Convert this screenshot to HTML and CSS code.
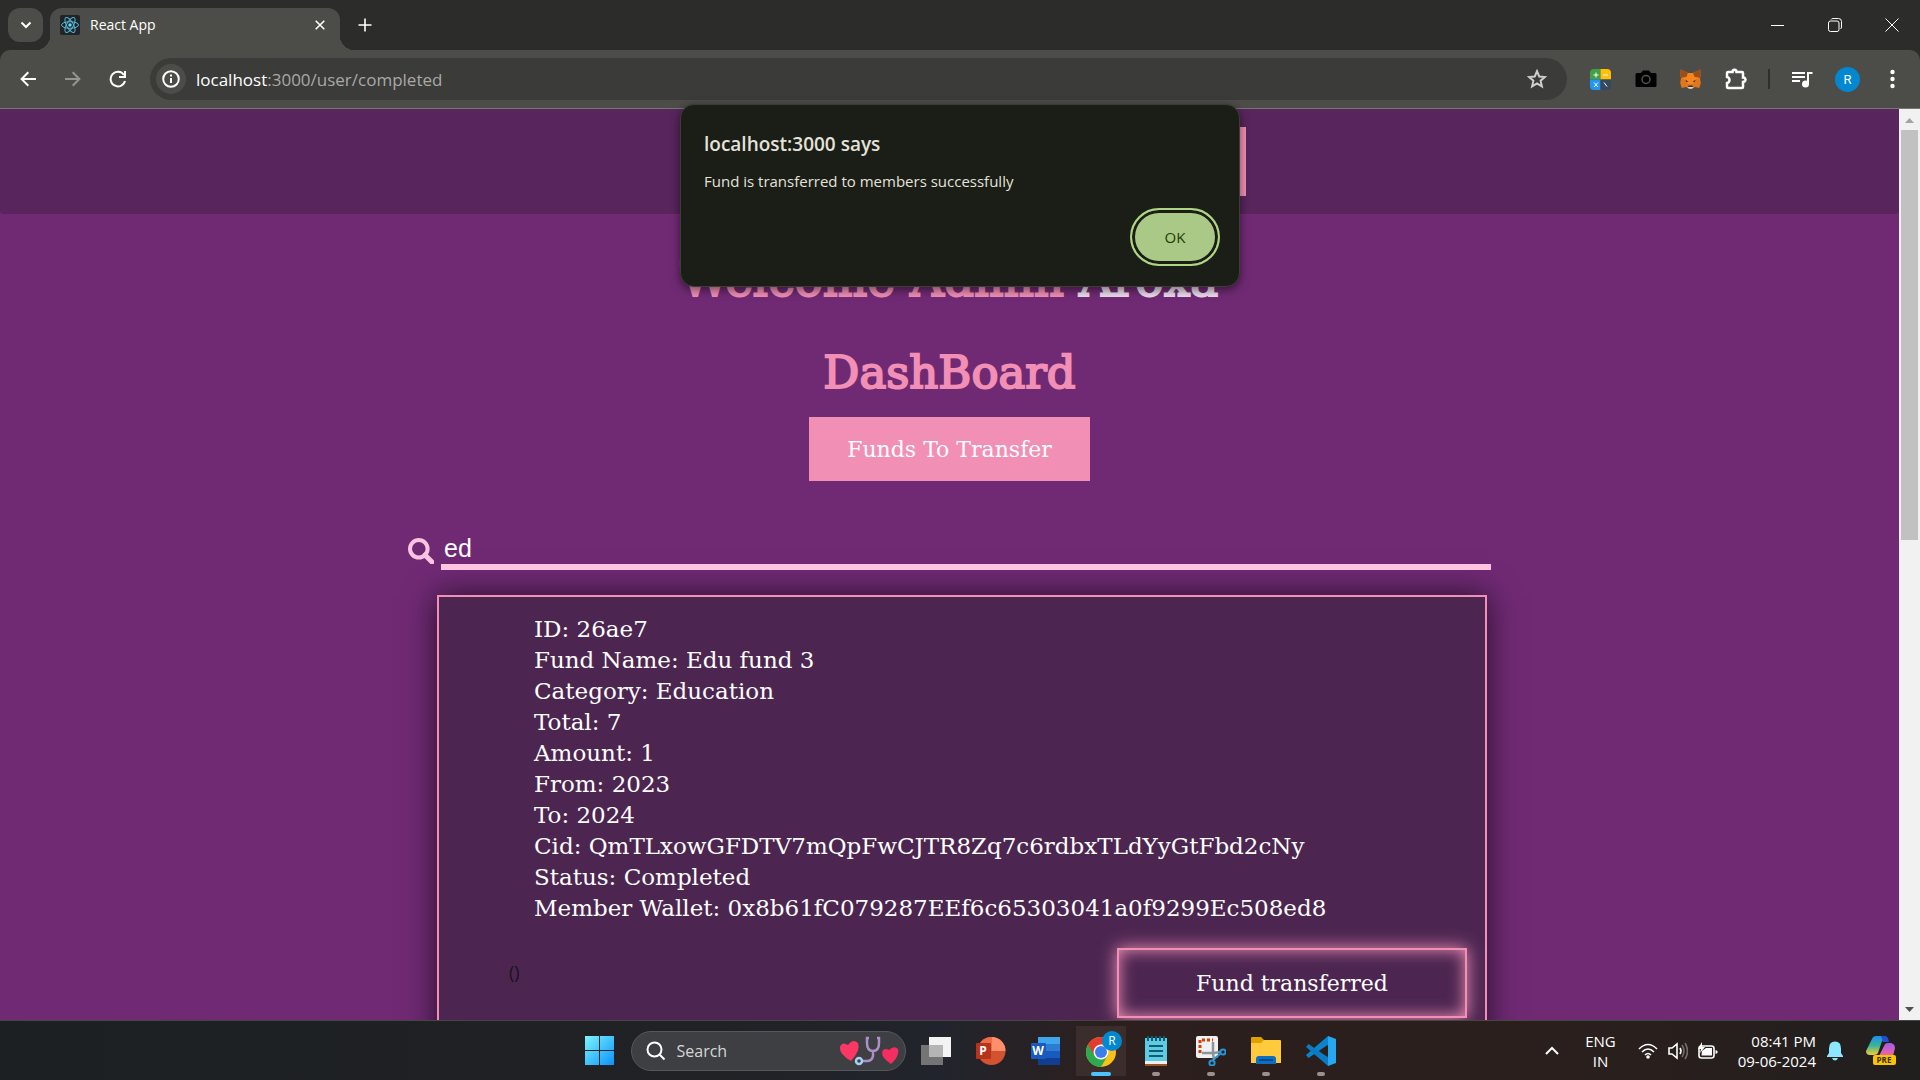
FILE: index.html
```html
<!DOCTYPE html>
<html lang="en">
<head>
<meta charset="utf-8">
<title>React App</title>
<link rel="stylesheet" href="styles.css">
</head>
<body>
<header class="titlebar">
  <button class="tab-search" aria-label="Search tabs"><svg width="12" height="8" viewBox="0 0 12 8"><path d="M1.500 1.500 6 6l4.500-4.500" class="line thick"/></svg></button>
  <div class="tab">
    <svg width="20" height="20" viewBox="0 0 20 20"><rect width="20" height="20" rx="2" fill="#20232a"/><g fill="none" stroke="#53b9d1" stroke-width="1"><ellipse cx="10" cy="10" rx="8.500" ry="3.300"/><ellipse cx="10" cy="10" rx="8.500" ry="3.300" transform="rotate(60 10 10)"/><ellipse cx="10" cy="10" rx="8.500" ry="3.300" transform="rotate(120 10 10)"/></g><circle cx="10" cy="10" r="1.700" fill="#61dafb"/></svg>
    <span class="tab-title">React App</span>
    <button class="plain" aria-label="Close tab"><svg width="10" height="10" viewBox="0 0 10 10"><path d="M.7.7l8.600 8.600M9.300.7.7 9.300" class="line"/></svg></button>
  </div>
  <button class="plain new-tab" aria-label="New tab"><svg width="14" height="14" viewBox="0 0 14 14"><path d="M7 .5v13M.5 7h13" class="line"/></svg></button>
  <div class="window-buttons">
    <button class="plain" aria-label="Minimize"><svg width="13" height="13" viewBox="0 0 13 13"><path d="M0 6.500h13" class="line thin"/></svg></button>
    <button class="plain" aria-label="Restore"><svg width="14" height="14" viewBox="0 0 14 14"><rect x=".5" y="3" width="10.500" height="10.500" rx="2" class="line thin"/><path d="M3 1.500Q3.500.5 5 .5h5.500q3 0 3 3V9q0 1.300-1 2" class="line thin"/></svg></button>
    <button class="plain" aria-label="Close"><svg width="14" height="14" viewBox="0 0 14 14"><path d="M.5.5l13 13M13.500.5l-13 13" class="line thin"/></svg></button>
  </div>
</header>
<nav class="toolbar" aria-label="Browser">
  <button class="plain slot" aria-label="Back"><svg width="16" height="16" viewBox="0 0 16 16"><path d="M16 8H1.800M8.300 1.300 1.600 8l6.700 6.700" class="line thick"/></svg></button>
  <button class="plain slot dim" aria-label="Forward"><svg width="16" height="16" viewBox="0 0 16 16"><path d="M0 8h14.200M7.700 1.300 14.400 8l-6.700 6.700" class="line thick"/></svg></button>
  <button class="plain slot" aria-label="Reload"><svg width="18" height="18" viewBox="0 0 18 18"><path d="M15 5A7.300 7.300 0 1 0 16 11M16 1v6h-6" class="line thick"/></svg></button>
  <div class="omnibox">
    <button class="plain site-info" aria-label="Site information"><svg width="18" height="18" viewBox="0 0 18 18"><circle cx="9" cy="9" r="7.800" class="line thick"/><path d="M9 8v5M9 4.500v2" class="line thick"/></svg></button>
    <span class="url"><b>localhost</b>:3000/user/completed</span>
    <button class="plain star" aria-label="Bookmark"><svg width="20" height="20" viewBox="0 0 20 20"><path d="M10 2.200l2.200 5.300 5.700.5-4.300 3.700 1.300 5.600-4.900-3-4.900 3 1.300-5.600L2.100 8l5.700-.5z" class="line thick"/></svg></button>
  </div>
  <button class="plain slot" aria-label="Calculator extension"><svg width="21" height="21" viewBox="0 0 21 21"><clipPath id="calc"><rect width="21" height="21" rx="4"/></clipPath><g clip-path="url(#calc)"><path fill="#43a047" d="M0 0h10.500v10.500H0z"/><path fill="#ffc107" d="M10.500 0H21v10.500H10.500z"/><path fill="#2196f3" d="M0 10.500h10.500V21H0z"/><path fill="#34495e" d="M10.500 10.500H21V21H10.500z"/></g><path d="M3.500 6h5M6 3.500v5M13 6h5M4 13.500l4 4.500M8 13.500l-4 4.500M14 13.500l3 4" class="line thin"/></svg></button>
  <button class="plain slot" aria-label="Camera extension"><svg width="22" height="18" viewBox="0 0 22 18"><path d="M2 3h4l2-2.500h6L16 3h4q1.500 0 1.500 1.500v11Q21.500 17 20 17H2Q.5 17 .5 15.500v-11Q.5 3 2 3z"/><circle cx="11" cy="9.500" r="4" fill="none" stroke="#555" stroke-width="1.500"/></svg></button>
  <button class="plain slot" aria-label="MetaMask"><svg width="21" height="20" viewBox="0 0 21 20"><path fill="#e2761b" d="M.8.5 8 4h5L20.200.5 21 5l-1 4 .8 5-1.500 5-4.300-1-2.500 1.500h-4L6 18l-4.300 1L.2 14 1 9 0 5z"/><path fill="#9c4d1c" d="M.8.5 8 4 6.500 8 1 9 0 5zM20.200.5 13 4l1.500 4L20 9l1-4z"/><path fill="#f6851b" d="M1 9l5.500-1L8 4h5l1.500 4L20 9l-5 2-2 4H8l-2-4z"/><path fill="#233447" d="M5.500 11l3 1.500-2.300.5zM15.500 11l-3 1.500 2.300.5zM8.500 16.500h4l.5 1.500H8z"/><path fill="#d8d5d2" d="M7.500 18h6l-1.500 1.800H9z"/></svg></button>
  <button class="plain slot" aria-label="Extensions"><svg width="22" height="22" viewBox="0 0 22 22"><path d="M3 4h4.500q0-2 2-2.200 2 .2 2 2.200H17q1 0 1 1v4.500q2.300 0 2.500 2.200-.2 2.300-2.500 2.300V19q0 1-1 1H3q-1 0-1-1v-4q2.500-.5 2.500-3T2 9V5q0-1 1-1z" class="line heavy"/></svg></button>
  <span class="divider"></span>
  <button class="plain slot" aria-label="Media"><svg width="21" height="17" viewBox="0 0 21 17"><path d="M0 2h13M0 6h13M0 10h8M16 13V2h4.500" class="line thick"/><circle cx="13.500" cy="13" r="3.500" fill="#fff"/></svg></button>
  <button class="plain slot" aria-label="Profile"><span class="avatar">R</span></button>
  <button class="plain slot" aria-label="Menu"><svg width="5" height="20" viewBox="0 0 5 20"><g fill="#fff"><circle cx="2.500" cy="3" r="2.200"/><circle cx="2.500" cy="10" r="2.200"/><circle cx="2.500" cy="17" r="2.200"/></g></svg></button>
</nav>

<div class="viewport">
  <main class="page">
    <div class="site-nav"><div class="banner"></div></div>
    <h1>Welcome Admin <span>Aroxa</span></h1>
    <h2>DashBoard</h2>
    <button class="funds">Funds To Transfer</button>
    <div class="listing">
      <label class="search">
        <svg width="26" height="26" viewBox="0 0 26 26" role="img" aria-label="Search funds"><circle cx="10.800" cy="10.800" r="8.800" fill="none" stroke="#fcc4e0" stroke-width="4"/><path d="M17 17l7 7" stroke="#fcc4e0" stroke-width="5" stroke-linecap="round"/></svg>
        <input type="text" value="ed">
      </label>
      <article class="fund">
        <ul>
          <li>ID: 26ae7</li>
          <li>Fund Name: Edu fund 3</li>
          <li>Category: Education</li>
          <li>Total: 7</li>
          <li>Amount: 1</li>
          <li>From: 2023</li>
          <li>To: 2024</li>
          <li>Cid: QmTLxowGFDTV7mQpFwCJTR8Zq7c6rdbxTLdYyGtFbd2cNy</li>
          <li>Status: Completed</li>
          <li>Member Wallet: 0x8b61fC079287EEf6c65303041a0f9299Ec508ed8</li>
        </ul>
        <div class="fund-actions"><span>()</span><button class="transferred">Fund transferred</button></div>
      </article>
    </div>
  </main>
  <div class="scrollbar"><svg width="21" height="21" viewBox="0 0 21 21"><path fill="#a3a3a3" d="M6 14l4.500-5 4.500 5z"/></svg><div class="thumb"></div><svg class="down" width="21" height="21" viewBox="0 0 21 21"><path fill="#505050" d="M6 8h9l-4.500 5z"/></svg></div>
</div>

<dialog open class="alert">
  <h3>localhost:3000 says</h3>
  <p>Fund is transferred to members successfully</p>
  <button class="ok">OK</button>
</dialog>

<footer class="taskbar">
  <div class="apps">
    <button class="plain app" aria-label="Start"><svg width="29" height="29" viewBox="0 0 29 29"><defs><linearGradient id="win" x2="1" y2="1" gradientUnits="userSpaceOnUse" gradientTransform="scale(29)"><stop stop-color="#7df3fd"/><stop offset="1" stop-color="#0a93fc"/></linearGradient></defs><path fill="url(#win)" d="M0 0h14v14H0zM15 0h14v14H15zM0 15h14v14H0zM15 15h14v14H15z"/></svg></button>
    <button class="task-search">
      <svg width="20" height="20" viewBox="0 0 20 20"><circle cx="8.500" cy="8.500" r="7" class="line thick"/><path d="M13.500 13.500l5 5" class="line thick"/></svg>
      <span>Search</span>
      <svg width="60" height="30" viewBox="0 0 60 30"><path fill="#fb3766" d="M12 25Q0 18 1 11q2-6 8-2 5-7 10-2 3 7-7 18z"/><path fill="#f52d61" d="M52 28q-9-6-9-11 1-6 7-3 5-5 9-1 2 7-7 15z"/><path d="M30 2h-2v5q0 8 6 8t6-8V2h-2M34 15v5q-1 5-6 5h-4" fill="none" stroke="#ad8fca" stroke-width="2.500"/><circle cx="20" cy="25" r="3" fill="none" stroke="#a9d0f0" stroke-width="2.500"/></svg>
    </button>
    <button class="plain app" aria-label="Task view"><svg width="30" height="28" viewBox="0 0 30 28"><path fill="#f3f3f3" d="M8 0h22v20H8z"/><path fill="#747474" d="M0 8h22v20H0z"/><path fill="#b5b5b5" d="M8 8h14v12H8z"/></svg></button>
    <button class="plain app" aria-label="PowerPoint"><svg width="30" height="28" viewBox="0 0 30 28"><circle cx="15.500" cy="14" r="14" fill="#d35230"/><path fill="#ff8f6b" d="M15.500 0a14 14 0 0 1 14 14h-14z"/><path fill="#ed6c47" d="M15.500 0v14h-14a14 14 0 0 1 14-14z"/><rect y="6" width="15" height="16" rx="1" fill="#b7341a"/><text x="7" y="18" class="glyph">P</text></svg></button>
    <button class="plain app" aria-label="Word"><svg width="30" height="28" viewBox="0 0 30 28"><path fill="#41a5ee" d="M7 0h22v7H7z"/><path fill="#2b7cd3" d="M7 7h22v7H7z"/><path fill="#185abd" d="M7 14h22v7H7z"/><path fill="#103f91" d="M7 21h22v7H7z"/><rect y="6" width="15" height="16" rx="1" fill="#185abd"/><text x="7" y="18" class="glyph">W</text></svg></button>
    <button class="plain app active running" aria-label="Chrome"><svg width="38" height="38" viewBox="0 0 38 38"><circle cx="17" cy="22" r="15" fill="#fbc116"/><path fill="#2da94f" d="M4 14.500A15 15 0 0 0 17 37l7-12-7-3z"/><path fill="#e33b2e" d="M4 14.500a15 15 0 0 1 26 0H17v7.500l-6.500 4z"/><circle cx="17" cy="22" r="7.500" fill="#fff"/><circle cx="17" cy="22" r="6" fill="#3b7ded"/><circle cx="28" cy="11" r="10" fill="#0288d1"/><text x="28" y="15" class="glyph letter">R</text></svg></button>
    <button class="plain app running" aria-label="Notepad"><svg width="24" height="30" viewBox="0 0 24 30"><path fill="#9a5421" d="M1 25h22v5H1z"/><path fill="#eee" d="M1 23h22v5H1z"/><path fill="#5fcbe0" d="M1 2h22v23H1z"/><path d="M4 0v5M8 0v5M12 0v5M16 0v5M20 0v5M5 10h14M5 15h14M5 20h14" stroke="#0c5d78" stroke-width="2"/></svg></button>
    <button class="plain app running" aria-label="Snipping Tool"><svg width="30" height="30" viewBox="0 0 30 30"><rect width="22" height="22" rx="2" fill="#eef0f2"/><path d="M4 17V4h13" fill="none" stroke="#d83b01" stroke-width="3" stroke-dasharray="3 2"/><path d="M17 6v12l1 6M6 17h12l6-1" fill="none" stroke="#8d9399" stroke-width="2.500"/><g fill="none" stroke="#2198db" stroke-width="2"><circle cx="27" cy="16" r="2.600"/><circle cx="16" cy="27" r="2.600"/><path d="M18 23l6-5"/></g></svg></button>
    <button class="plain app running" aria-label="File Explorer"><svg width="30" height="27" viewBox="0 0 30 27"><path fill="#dfa000" d="M0 1q0-1 1-1h9l3 3v5H0z"/><path fill="#ffcb3d" d="M0 6h10l3-3h16q1 0 1 1v22H0z"/><path fill="#0c6fc4" d="M5 27v-5q0-3 3-3h14q3 0 3 3v5z"/><path stroke="#084a86" stroke-width="2" d="M8 23h14"/></svg></button>
    <button class="plain app running" aria-label="Visual Studio Code"><svg width="30" height="30" viewBox="0 0 30 30"><path fill="#0a84cf" d="M22 0L0 19l2.500 3L23 8z"/><path fill="#0a7cc4" d="M0 11l2.500-3L23 22l-1 8z"/><path fill="#27a7f2" d="M22 0l8 3v24l-8 3z"/></svg></button>
  </div>
  <div class="tray">
    <button class="plain" aria-label="Hidden icons"><svg width="14" height="9" viewBox="0 0 14 9"><path d="M1 8l6-6 6 6" class="line thick"/></svg></button>
    <div class="language">ENG<br>IN</div>
    <div class="status">
      <svg width="20" height="16" viewBox="0 0 20 16"><path d="M1 6q9-9 18 0M4 9q6-6 12 0M7 12q3-3 6 0" class="line"/><circle cx="10" cy="14" r="1.800" fill="#fff"/></svg>
      <svg width="20" height="18" viewBox="0 0 20 18"><path d="M1 6v6h3l5 4V2L4 6zM12 6q2 3 0 6" class="line"/><path d="M14 3q4 6 0 12M17 1q5 8 0 16" class="line faint"/></svg>
      <svg width="20" height="17" viewBox="0 0 20 17"><rect x="1" y="4" width="15" height="12" rx="2.500" class="line"/><path fill="#fff" d="M4 9l4-3h6v7.500H3.500zM17.500 8l2 1v2l-2 1zM4 0L0 7h3l-1 4 5-6H4z"/></svg>
    </div>
    <div class="clock">08:41 PM<br>09-06-2024</div>
    <svg class="bell" width="16" height="20" viewBox="0 0 16 20"><path fill="#8ce6ff" d="M8 .5q6 0 6 7V12l2 3v1H0v-1l2-3V7.500q0-7 6-7zM5 17h6q-1 2.500-3 2.500T5 17z"/></svg>
    <svg width="30" height="29" viewBox="0 0 30 29"><defs><linearGradient id="cl" x2="0" y2="1"><stop stop-color="#1f8df0"/><stop offset=".5" stop-color="#37b59a"/><stop offset="1" stop-color="#f5cc32"/></linearGradient><linearGradient id="cr" x2="0" y2="1"><stop stop-color="#a25ceb"/><stop offset="1" stop-color="#f4669a"/></linearGradient></defs><path fill="url(#cl)" d="M6 3q1-3 4-3h8q3 0 4 4l-6 1-4 12q-1 2-4 2H4q-4 0-4-4z"/><path fill="#244ed0" d="M15 0h4q3 0 4 6h-6z"/><path fill="url(#cr)" d="M18 10q1-3 4-3h3q4 1 4 5l-2 8H13z"/><rect x="7" y="19" width="23" height="10" rx="2" fill="#f9c400"/><text x="18" y="27" class="pre">PRE</text></svg>
  </div>
</footer>
</body>
</html>
```
FILE: styles.css
```css
* { box-sizing: border-box; }

body {
  margin: 0;
  height: 100vh;
  display: flex;
  flex-direction: column;
  overflow: hidden;
  background: #2c2c2a;
  color: #fff;
  font-family: "Open Sans", "Noto Sans", sans-serif;
}

h1, h2, h3, p, ul { margin: 0; padding: 0; }
button { font: inherit; color: inherit; border: 0; cursor: pointer; }
svg { display: block; flex: none; }

.plain {
  display: flex;
  align-items: center;
  justify-content: center;
  padding: 0;
  background: none;
}

.line { fill: none; stroke: #fff; stroke-width: 1.600; }
.thin { stroke-width: 1; }
.thick { stroke-width: 2; }
.heavy { stroke-width: 2.500; }
.faint { stroke: #716b69; }

/* Tab strip */
.titlebar { flex: none; height: 50px; display: flex; padding: 8px 0 0 8px; }

.tab-search {
  display: grid;
  place-items: center;
  width: 35px;
  height: 34px;
  padding: 0;
  border-radius: 12px;
  background: #4c4d48;
}

.tab {
  position: relative;
  display: flex;
  align-items: center;
  width: 290px;
  margin-left: 7px;
  padding: 0 15px 8px 10px;
  border-radius: 12px 12px 0 0;
  background: #4c4d48;
}

.tab::before, .tab::after {
  content: "";
  position: absolute;
  bottom: 0;
  width: 14px;
  height: 14px;
}
.tab::before { right: 100%; background: radial-gradient(circle at 0 0, transparent 14px, #4c4d48 14px); }
.tab::after { left: 100%; background: radial-gradient(circle at 100% 0, transparent 14px, #4c4d48 14px); }

.tab-title { flex: 1; margin-left: 10px; font-size: 14px; line-height: 20px; }
.new-tab { width: 50px; height: 34px; }
.window-buttons { display: flex; height: 34px; margin-left: auto; }
.window-buttons .plain { width: 57px; }

/* Address bar row */
.toolbar {
  flex: none;
  height: 59px;
  display: flex;
  align-items: center;
  padding: 0 5px;
  border-bottom: 1px solid #777771;
  border-radius: 10px 10px 0 0;
  background: #4c4d48;
}
.slot { width: 45px; height: 40px; }
.dim { opacity: 0.400; }

.omnibox {
  flex: 1;
  display: flex;
  align-items: center;
  height: 42px;
  margin: 0 11px 0 10px;
  padding: 0 20px 0 6px;
  border-radius: 21px;
  background: #3b3b39;
}
.site-info { width: 30px; height: 30px; border-radius: 50%; background: #4c4d48; }
.url { flex: 1; margin-left: 10px; font-size: 17px; color: #a9a9a6; }
.url b { font-weight: 400; color: #fff; }
.star { opacity: 0.750; }
.divider { width: 2px; height: 20px; margin: 0 10px; background: #2f2f2d; }

.avatar {
  width: 25px;
  border-radius: 50%;
  background: #0288d1;
  font: 13px/25px Roboto, sans-serif;
}

/* Web page */
.viewport { flex: 1; min-height: 0; display: flex; overflow: hidden; }

.page {
  flex: 1;
  display: flex;
  flex-direction: column;
  align-items: center;
  overflow: hidden;
  background: #702a74;
  font-family: "DejaVu Serif", serif;
}

.site-nav {
  flex: none;
  align-self: stretch;
  display: flex;
  height: 105px;
  padding: 18px 0;
  border-radius: 0 0 4px 4px;
  background: #58255c;
}

.banner {
  width: 296px;
  margin-left: 50%;
  background: #f18fb5;
}

h1, h2 {
  flex: none;
  color: #f18fb5;
  font-weight: 400;
  -webkit-text-stroke: 2px currentColor;
}
h1 { margin-top: 36px; font-size: 47px; line-height: 60px; }
h1 span { color: #ecdcec; }
h2 { margin-top: 33px; font-size: 45px; line-height: 60px; }

.funds {
  flex: none;
  width: 281px;
  height: 64px;
  margin-top: 14px;
  background: #f18fb5;
  font-size: 22px;
}

.listing { flex: none; width: 1083px; max-width: 100%; margin-top: 50px; }
.search { display: flex; align-items: center; gap: 7px; }

.search input {
  flex: 1;
  height: 39px;
  padding: 2px 3px 0;
  border: 0;
  border-bottom: 6px solid #fcc4e0;
  outline: 0;
  background: none;
  color: #fff;
  font: 25px "Liberation Sans", sans-serif;
}

.fund {
  height: 520px;
  margin: 25px 4px 0 29px;
  padding: 17px 18px 0 70px;
  border: 2px solid #f18fb5;
  background: #4c2651;
  box-shadow: 0 0 30px #24102a;
}
.fund ul { padding-left: 25px; list-style: none; font-size: 23px; line-height: 31px; }

.fund-actions { display: flex; justify-content: space-between; margin-top: 24px; }
.fund-actions span { padding-top: 12px; color: #1d1020; font: 18px/24px "Open Sans", sans-serif; }

.transferred {
  width: 350px;
  height: 70px;
  border: 2px solid #f18fb5;
  background: none;
  box-shadow: 0 0 16px #f18fb5, inset 0 0 16px #f18fb5;
  font-size: 22px;
}

.scrollbar { flex: none; display: flex; flex-direction: column; align-items: center; width: 21px; background: #f1f1f1; }
.thumb { width: 17px; height: 45%; background: #c1c1c1; }
.down { margin-top: auto; }

/* Alert over the page */
.alert {
  position: absolute;
  top: 104px;
  width: 560px;
  margin: 0 auto;
  padding: 26px 19px 20px 23px;
  border: 1px solid #3b3d36;
  border-radius: 14px;
  background: #1b1d17;
  color: #e4e3da;
  box-shadow: 0 3px 10px rgba(0, 0, 0, 0.500);
}
.alert h3 { font-size: 19px; font-weight: 600; line-height: 26px; }
.alert p { margin-top: 14px; font-size: 15px; line-height: 20px; }

.ok {
  display: block;
  width: 90px;
  height: 58px;
  margin: 17px 0 0 auto;
  border: 2px solid #aed581;
  border-radius: 29px;
  background: #abc986;
  box-shadow: inset 0 0 0 3px #1b1d17;
  color: #233d08;
  font-size: 15px;
}

/* Desktop taskbar */
.taskbar {
  flex: none;
  display: grid;
  grid-template-columns: 1fr auto 1fr;
  height: 60px;
  border-top: 1px solid #484645;
  background: linear-gradient(90deg, #1d2023, #202226 38%, #22242d 49%, #2c1f1d 58%, #291f1d 86%, #201f1e);
}
.apps { grid-column: 2; display: flex; align-items: center; }

.app { position: relative; width: 55px; height: 50px; }
.active { background: linear-gradient(#3b2d2b, #3b2d2b) center / 50px 50px no-repeat; }
.active svg { margin: 0 0 4px 4px; }
.running::after {
  content: "";
  position: absolute;
  bottom: 0;
  left: calc(50% - 4px);
  width: 8px;
  height: 4px;
  border-radius: 2px;
  background: #9c918f;
}
.active::after { left: calc(50% - 10px); width: 20px; background: #4cc2ff; }

.glyph { fill: #fff; font: bold 12px "Open Sans", sans-serif; text-anchor: middle; }
.letter { font-weight: 400; }
.pre { fill: #3a2c00; font: bold 8px "Open Sans", sans-serif; text-anchor: middle; }

.task-search {
  display: flex;
  align-items: center;
  width: 275px;
  height: 40px;
  margin: 0 3px 0 4px;
  padding: 0 6px 0 14px;
  border: 1px solid #55575a;
  border-radius: 20px;
  background: #3d3f43;
  color: #d6d6d6;
  font-size: 16px;
  text-align: left;
}
.task-search span { flex: 1; margin-left: 11px; }

.tray {
  display: flex;
  align-items: center;
  justify-content: flex-end;
  padding-right: 24px;
  font-size: 15px;
  line-height: 20px;
}
.language { margin-left: 26px; text-align: center; }
.status { display: flex; align-items: center; gap: 10px; margin-left: 22px; }
.clock { margin-left: 20px; text-align: right; }
.bell { margin: 0 23px 0 11px; }
```
